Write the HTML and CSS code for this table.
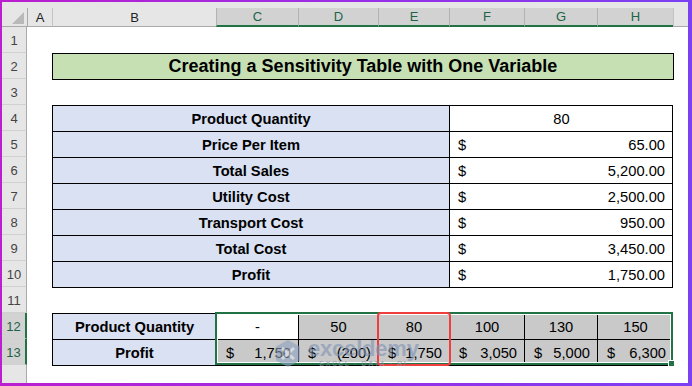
FILE: index.html
```html
<!DOCTYPE html>
<html>
<head>
<meta charset="utf-8">
<link rel="stylesheet" href="styles.css">
</head>
<body>
<div class="frame">
  <div class="sheet">
    <div class="corner"><span class="tri"></span></div>
    <div class="colheads">
      <div class="ch">A</div>
      <div class="ch">B</div>
      <div class="ch sel">C</div>
      <div class="ch sel">D</div>
      <div class="ch sel">E</div>
      <div class="ch sel">F</div>
      <div class="ch sel">G</div>
      <div class="ch sel">H</div>
      <div class="ch"></div>
    </div>
    <div class="rowheads">
      <div class="rh">1</div>
      <div class="rh">2</div>
      <div class="rh">3</div>
      <div class="rh">4</div>
      <div class="rh">5</div>
      <div class="rh">6</div>
      <div class="rh">7</div>
      <div class="rh">8</div>
      <div class="rh">9</div>
      <div class="rh">10</div>
      <div class="rh">11</div>
      <div class="rh sel">12</div>
      <div class="rh sel">13</div>
      <div class="rh last"></div>
    </div>
    <div class="cells">
      <div class="title">Creating a Sensitivity Table with One Variable</div>

      <div class="info">
        <div class="c lbl">Product Quantity</div>
        <div class="c val center">80</div>
        <div class="c lbl">Price Per Item</div>
        <div class="c val"><span>$</span><span>65.00</span></div>
        <div class="c lbl">Total Sales</div>
        <div class="c val"><span>$</span><span>5,200.00</span></div>
        <div class="c lbl">Utility Cost</div>
        <div class="c val"><span>$</span><span>2,500.00</span></div>
        <div class="c lbl">Transport Cost</div>
        <div class="c val"><span>$</span><span>950.00</span></div>
        <div class="c lbl">Total Cost</div>
        <div class="c val"><span>$</span><span>3,450.00</span></div>
        <div class="c lbl">Profit</div>
        <div class="c val"><span>$</span><span>1,750.00</span></div>
      </div>

      <div class="sens">
        <div class="c lbl">Product Quantity</div>
        <div class="c center">-</div>
        <div class="c gray center">50</div>
        <div class="c gray center">80</div>
        <div class="c gray center">100</div>
        <div class="c gray center">130</div>
        <div class="c gray center">150</div>
        <div class="c lbl">Profit</div>
        <div class="c gray acc"><span>$</span><span>1,750</span></div>
        <div class="c gray acc"><span>$</span><span>(200)</span></div>
        <div class="c gray acc"><span>$</span><span>1,750</span></div>
        <div class="c gray acc"><span>$</span><span>3,050</span></div>
        <div class="c gray acc"><span>$</span><span>5,000</span></div>
        <div class="c gray acc"><span>$</span><span>6,300</span></div>
      </div>

      <div class="selection"><span class="handle"></span></div>
      <div class="redbox"></div>

      <div class="wm">
        <svg class="wm-logo" width="26" height="29" viewBox="0 0 26 29">
          <path d="M13 1 L25 7.5 L25 21.5 L13 28 L1 21.5 L1 7.5 Z" fill="#8ea2c0"/>
          <path d="M7 9 L13 14.5 L19 9 M7 20 L13 14.5 L19 20" stroke="#dfe6f0" stroke-width="3" fill="none"/>
        </svg>
        <div class="wm-text">
          <div class="wm-name">exceldemy</div>
          <div class="wm-sub">EXCEL · DATA · BI</div>
        </div>
      </div>
    </div>
  </div>
</div>
</body>
</html>
```
FILE: styles.css
```css
* { box-sizing: border-box; }
html, body { margin: 0; padding: 0; }
body { width: 692px; height: 386px; overflow: hidden; }

.frame {
  width: 692px;
  height: 386px;
  padding: 2px 4px 3px 2px;
  background: linear-gradient(90deg, #bb1fcf 0%, #9a2ee6 50%, #7b40f2 100%);
}

.sheet {
  width: 686px;
  height: 381px;
  background: #fff;
  display: grid;
  grid-template-columns: 25px 661px;
  grid-template-rows: 25px 356px;
  font-family: "Liberation Sans", Arial, sans-serif;
  color: #000;
}

.corner {
  background: #e6e6e6;
  border-bottom: 1px solid #a9a9a9;
  position: relative;
}
.tri {
  position: absolute;
  left: 10px;
  top: 10px;
  width: 0;
  height: 0;
  border-left: 12px solid transparent;
  border-bottom: 12px solid #b9b9b9;
}

.colheads {
  display: grid;
  grid-template-columns: 25px 164px 82px 80px 71px 75px 73px 76px 15px;
  padding-top: 6px;
  background: #e6e6e6;
}
.ch {
  border-left: 1px solid #c4c4c4;
  border-bottom: 1px solid #a9a9a9;
  display: flex;
  align-items: center;
  justify-content: center;
  font-size: 13px;
  color: #222;
}
.ch:first-child { border-left-color: #a9a9a9; }
.ch.sel {
  background: #d2d2d2;
  border-left-color: #b3b3b3;
  border-bottom: 2px solid #217346;
  color: #1d6346;
}

.rowheads {
  display: grid;
  grid-template-rows: repeat(13, 26px) 18px;
  background: #e6e6e6;
}
.rh {
  border-right: 1px solid #a9a9a9;
  border-bottom: 1px solid #d0d0d0;
  display: flex;
  align-items: center;
  justify-content: center;
  font-size: 13px;
  color: #444;
  padding-top: 2px;
}
.rh.sel {
  background: #d2d2d2;
  border-right: 2px solid #217346;
  color: #1d6346;
}
.rh.last { border-bottom: none; }

.cells {
  display: grid;
  grid-template-columns: 25px 164px 82px 80px 71px 75px 73px 76px 15px;
  grid-template-rows: repeat(13, 26px) 18px;
  position: relative;
}

.title {
  grid-column: 2 / 9;
  grid-row: 2 / 3;
  width: calc(100% + 1px);
  height: 27px;
  background: #c6e0b4;
  border: 1px solid #000;
  display: flex;
  align-items: center;
  justify-content: center;
  font-weight: bold;
  font-size: 18px;
}

.info {
  grid-column: 2 / 9;
  grid-row: 4 / 11;
  align-self: start;
  display: grid;
  grid-template-columns: 397px 224px;
  grid-auto-rows: 26px;
  border-right: 1px solid #000;
  border-bottom: 1px solid #000;
}

.sens {
  grid-column: 2 / 9;
  grid-row: 12 / 14;
  align-self: start;
  display: grid;
  grid-template-columns: 164px 82px 80px 71px 75px 73px 76px;
  grid-auto-rows: 26px;
  border-right: 1px solid #000;
  border-bottom: 1px solid #000;
}

.c {
  border-top: 1px solid #000;
  border-left: 1px solid #000;
  display: flex;
  align-items: center;
  font-size: 14.7px;
  padding-top: 1px;
  white-space: nowrap;
}
.lbl {
  background: #d9e1f2;
  font-weight: bold;
  justify-content: center;
}
.center { justify-content: center; }
.val {
  justify-content: space-between;
  padding-left: 8px;
  padding-right: 8px;
}
.val.center { justify-content: center; }
.gray { background: #c9c9c9; }
.acc {
  justify-content: space-between;
  padding-left: 9px;
  padding-right: 7px;
}

.selection {
  grid-column: 3 / 9;
  grid-row: 12 / 14;
  margin: -1px 0 0 -1px;
  border: 2px solid #217346;
  box-shadow: inset 0 0 0 1px #fff;
  position: relative;
  z-index: 2;
  pointer-events: none;
}
.handle {
  position: absolute;
  right: -4px;
  bottom: -4px;
  width: 7px;
  height: 7px;
  background: #217346;
  border: 1px solid #fff;
}

.redbox {
  grid-column: 5 / 6;
  grid-row: 12 / 14;
  margin: -1px -2px -1px -1px;
  border: 2px solid #ef3e3e;
  border-radius: 4px;
  z-index: 3;
  pointer-events: none;
}

.wm {
  position: absolute;
  left: 248px;
  top: 311px;
  display: flex;
  align-items: center;
  gap: 7px;
  opacity: 0.6;
  z-index: 4;
  pointer-events: none;
}
.wm-logo { display: block; }
.wm-text {
  display: flex;
  flex-direction: column;
  align-items: center;
}
.wm-name {
  font-family: "Liberation Sans", Arial, sans-serif;
  font-weight: bold;
  font-size: 22px;
  line-height: 22px;
  color: #7d93b5;
  letter-spacing: -0.2px;
}
.wm-sub {
  font-family: "Liberation Sans", Arial, sans-serif;
  font-weight: bold;
  font-size: 7px;
  line-height: 8px;
  letter-spacing: 1.6px;
  color: #8b95a6;
}
```
